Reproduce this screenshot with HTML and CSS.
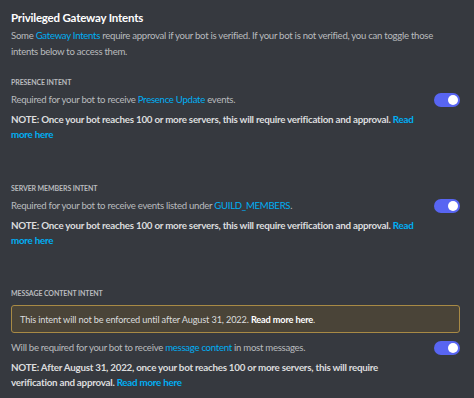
FILE: index.html
```html
<!DOCTYPE html>
<html lang="en">
<head>
    <meta charset="UTF-8">
    <title>Privileged Gateway Intents</title>
    <link rel="stylesheet" href="styles.css">
</head>
<body>
    <div class="panel">
        <h1 class="title">Privileged Gateway Intents</h1>
        <p class="intro">Some <a href="#">Gateway Intents</a> require approval if your bot is verified. If your bot is not verified, you can toggle those intents below to access them.</p>

        <section class="intent first">
            <h2 class="intent-name">Presence Intent</h2>
            <div class="intent-row">
                <div class="intent-text">
                    <p class="desc">Required for your bot to receive <a href="#">Presence Update</a> events.</p>
                    <p class="note">NOTE: Once your bot reaches 100 or more servers, this will require verification and approval. <a href="#">Read more here</a></p>
                </div>
                <span class="toggle on"><span class="knob"></span></span>
            </div>
        </section>

        <section class="intent">
            <h2 class="intent-name">Server Members Intent</h2>
            <div class="intent-row">
                <div class="intent-text">
                    <p class="desc">Required for your bot to receive events listed under <a href="#">GUILD_MEMBERS</a>.</p>
                    <p class="note">NOTE: Once your bot reaches 100 or more servers, this will require verification and approval. <a href="#">Read more here</a></p>
                </div>
                <span class="toggle on"><span class="knob"></span></span>
            </div>
        </section>

        <section class="intent">
            <h2 class="intent-name">Message Content Intent</h2>
            <div class="warning">This intent will not be enforced until after August 31, 2022. <strong>Read more here</strong>.</div>
            <div class="intent-row last">
                <div class="intent-text">
                    <p class="desc">Will be required for your bot to receive <a href="#">message content</a> in most messages.</p>
                    <p class="note">NOTE: After August 31, 2022, once your bot reaches 100 or more servers, this will require verification&nbsp;and&nbsp;approval. <a href="#">Read more here</a></p>
                </div>
                <span class="toggle on"><span class="knob"></span></span>
            </div>
        </section>
    </div>
</body>
</html>
```

FILE: styles.css
```css
body {
    margin: 0;
    background: #36393f;
    font-family: Lato, "Noto Sans", sans-serif;
    color: #b9bbbe;
}

.panel {
    padding: 8px 14px 0 11px;
}

a {
    color: #00aff4;
    text-decoration: none;
}

.title {
    margin: 0;
    font-size: 11.5px;
    font-weight: 700;
    letter-spacing: -0.2px;
    color: #ffffff;
    line-height: 20px;
}

.intro {
    margin: 0;
    font-size: 9.6px;
    letter-spacing: -0.28px;
    line-height: 16px;
}

.intent {
    margin-top: 39.5px;
}

.intent.first {
    margin-top: 16px;
}

.intent-name {
    margin: 0;
    font-size: 7px;
    font-weight: 700;
    letter-spacing: -0.1px;
    text-transform: uppercase;
    line-height: 12px;
    color: #b9bbbe;
}

.intent-row {
    display: flex;
    align-items: flex-start;
    gap: 10px;
    margin-top: 4px;
}

.intent-row.last {
    margin-top: 7px;
}

.intent-text {
    flex: 1;
}

.desc {
    margin: 0;
    font-size: 9.6px;
    letter-spacing: -0.28px;
    line-height: 16px;
}

.note {
    margin: 4px 0 0;
    font-size: 9.8px;
    font-weight: 700;
    letter-spacing: -0.25px;
    line-height: 15px;
    color: #dcddde;
}

.toggle {
    flex: none;
    box-sizing: border-box;
    width: 26px;
    height: 14px;
    margin-top: 1px;
    border-radius: 7px;
    background: #5865f2;
    display: flex;
    align-items: center;
    justify-content: flex-end;
    padding: 0 2px;
}

.knob {
    width: 10px;
    height: 10px;
    border-radius: 50%;
    background: #ffffff;
}

.warning {
    margin-top: 6px;
    padding: 5.5px 8px;
    border: 1px solid #a88a45;
    border-radius: 3px;
    background: #4a4438;
    color: #dcddde;
    font-size: 9.2px;
    letter-spacing: -0.15px;
    line-height: 15px;
}

.warning strong {
    color: #ffffff;
}
```
